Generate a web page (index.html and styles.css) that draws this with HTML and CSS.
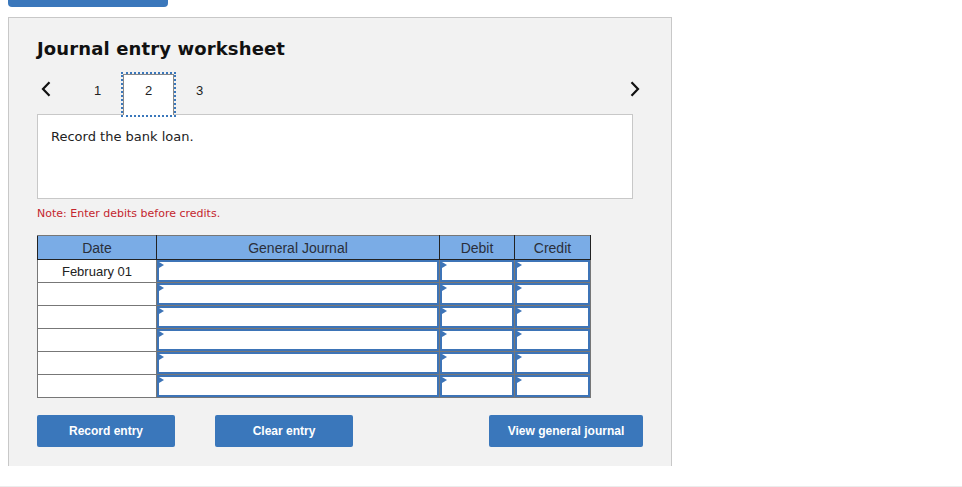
FILE: index.html
```html
<!DOCTYPE html>
<html>
<head>
<meta charset="UTF-8">
<title>Journal entry worksheet</title>
<link rel="stylesheet" href="styles.css">
</head>
<body>

    <div class="top-tab"></div>

    <div class="panel">
        <h2 class="title">Journal entry worksheet</h2>

        <div class="steps">
            <span class="nav prev">
                <svg width="10" height="16" viewBox="0 0 10 16"><polyline points="8.5,1.2 2,8 8.5,14.8" fill="none" stroke="#111" stroke-width="2.2"/></svg>
            </span>
            <span class="step">1</span>
            <span class="step active">2</span>
            <span class="step">3</span>
            <span class="nav next">
                <svg width="10" height="16" viewBox="0 0 10 16"><polyline points="1.5,1.2 8,8 1.5,14.8" fill="none" stroke="#111" stroke-width="2.2"/></svg>
            </span>
        </div>

        <div class="question">Record the bank loan.</div>

        <p class="note">Note: Enter debits before credits.</p>

        <table class="journal">
            <colgroup>
                <col class="c-date">
                <col class="c-account">
                <col class="c-debit">
                <col class="c-credit">
            </colgroup>
            <tr>
                <th>Date</th>
                <th>General Journal</th>
                <th>Debit</th>
                <th>Credit</th>
            </tr>
            <tr>
                <td class="date">February 01</td>
                <td><div class="entry"></div></td>
                <td><div class="entry"></div></td>
                <td><div class="entry"></div></td>
            </tr>
            <tr>
                <td class="date"></td>
                <td><div class="entry"></div></td>
                <td><div class="entry"></div></td>
                <td><div class="entry"></div></td>
            </tr>
            <tr>
                <td class="date"></td>
                <td><div class="entry"></div></td>
                <td><div class="entry"></div></td>
                <td><div class="entry"></div></td>
            </tr>
            <tr>
                <td class="date"></td>
                <td><div class="entry"></div></td>
                <td><div class="entry"></div></td>
                <td><div class="entry"></div></td>
            </tr>
            <tr>
                <td class="date"></td>
                <td><div class="entry"></div></td>
                <td><div class="entry"></div></td>
                <td><div class="entry"></div></td>
            </tr>
            <tr>
                <td class="date"></td>
                <td><div class="entry"></div></td>
                <td><div class="entry"></div></td>
                <td><div class="entry"></div></td>
            </tr>
        </table>

        <div class="actions">
            <button type="button">Record entry</button>
            <button type="button">Clear entry</button>
            <button type="button" class="view">View general journal</button>
        </div>
    </div>

    <div class="footer-line"></div>

</body>
</html>
```

FILE: styles.css
```css
* {
    box-sizing: border-box;
}

body {
    margin: 0;
    background-color: #fff;
    font-family: "DejaVu Sans", Verdana, sans-serif;
    color: #222;
}

.top-tab {
    margin-left: 8px;
    width: 160px;
    height: 7px;
    background-color: #3a77bb;
    border-radius: 0 0 4px 4px;
}

.panel {
    margin: 10px 0 0 8px;
    width: 664px;
    height: 449px;
    background-color: #f2f2f2;
    border: 1px solid #c8c8c8;
    border-bottom: none;
    padding: 20px 0 0 28px;
}

.title {
    margin: 0;
    font-size: 18px;
    line-height: 21px;
    font-weight: bold;
    letter-spacing: 0.13px;
    color: #111;
}

/* step tabs */
.steps {
    display: flex;
    align-items: flex-start;
    width: 596px;
    height: 40px;
    margin-top: 15px;
    position: relative;
    z-index: 1;
}

.nav {
    display: block;
    height: 16px;
    margin-top: 7px;
}

.nav.prev {
    width: 35px;
    padding-left: 4px;
}

.nav.next {
    margin-left: auto;
    margin-right: -7px;
}

.nav svg {
    display: block;
}

.step {
    width: 51px;
    height: 41px;
    padding-top: 8px;
    text-align: center;
    font-family: "Liberation Sans", Arial, sans-serif;
    font-size: 13px;
    line-height: 15px;
    color: #222;
    border: 1px solid transparent;
    border-bottom: none;
}

.step.active {
    background-color: #fff;
    border-color: #8a8a8a;
    outline: 2px dotted #3a77bb;
}

.question {
    width: 596px;
    height: 85px;
    background-color: #fff;
    border: 1px solid #c8c8c8;
    padding: 14px 0 0 13px;
    font-size: 13px;
    line-height: 15px;
    color: #222;
}

.note {
    margin: 8px 0 0 0;
    font-size: 11px;
    line-height: 13px;
    color: #c4262e;
}

/* journal table */
.journal {
    margin-top: 15px;
    border-collapse: collapse;
    table-layout: fixed;
    width: 553px;
    font-family: "Liberation Sans", Arial, sans-serif;
    font-size: 13px;
    border: 1px solid #777;
}

.c-date { width: 119px; }
.c-account { width: 283px; }
.c-debit { width: 75px; }
.c-credit { width: 76px; }

.journal th {
    height: 24px;
    padding: 0;
    background-color: #7aace6;
    border: 1px solid #222;
    border-top-color: #777;
    font-size: 14px;
    font-weight: normal;
    color: #2a2f3a;
}

.journal td {
    height: 23px;
    padding: 0;
    background-color: #fff;
    border: 1px solid #777;
}

.journal td.date {
    text-align: center;
    font-size: 13px;
    color: #222;
}

.entry {
    position: relative;
    height: 22px;
    border: 2px solid #3d74b7;
}

.entry::before {
    content: "";
    position: absolute;
    left: 0;
    top: 0;
    border-left: 5px solid #3d74b7;
    border-top: 3px solid transparent;
    border-bottom: 3px solid transparent;
}

/* buttons */
.actions {
    display: flex;
    gap: 40px;
    width: 606px;
    margin-top: 17px;
}

button {
    width: 138px;
    height: 32px;
    background-color: #3a77bb;
    color: #fff;
    border: none;
    border-radius: 2px;
    font-family: "Liberation Sans", Arial, sans-serif;
    font-size: 12px;
    font-weight: bold;
    cursor: pointer;
}

button.view {
    width: 154px;
    margin-left: auto;
}

.footer-line {
    margin-top: 20px;
    height: 1px;
    background-color: #ececec;
}
```
